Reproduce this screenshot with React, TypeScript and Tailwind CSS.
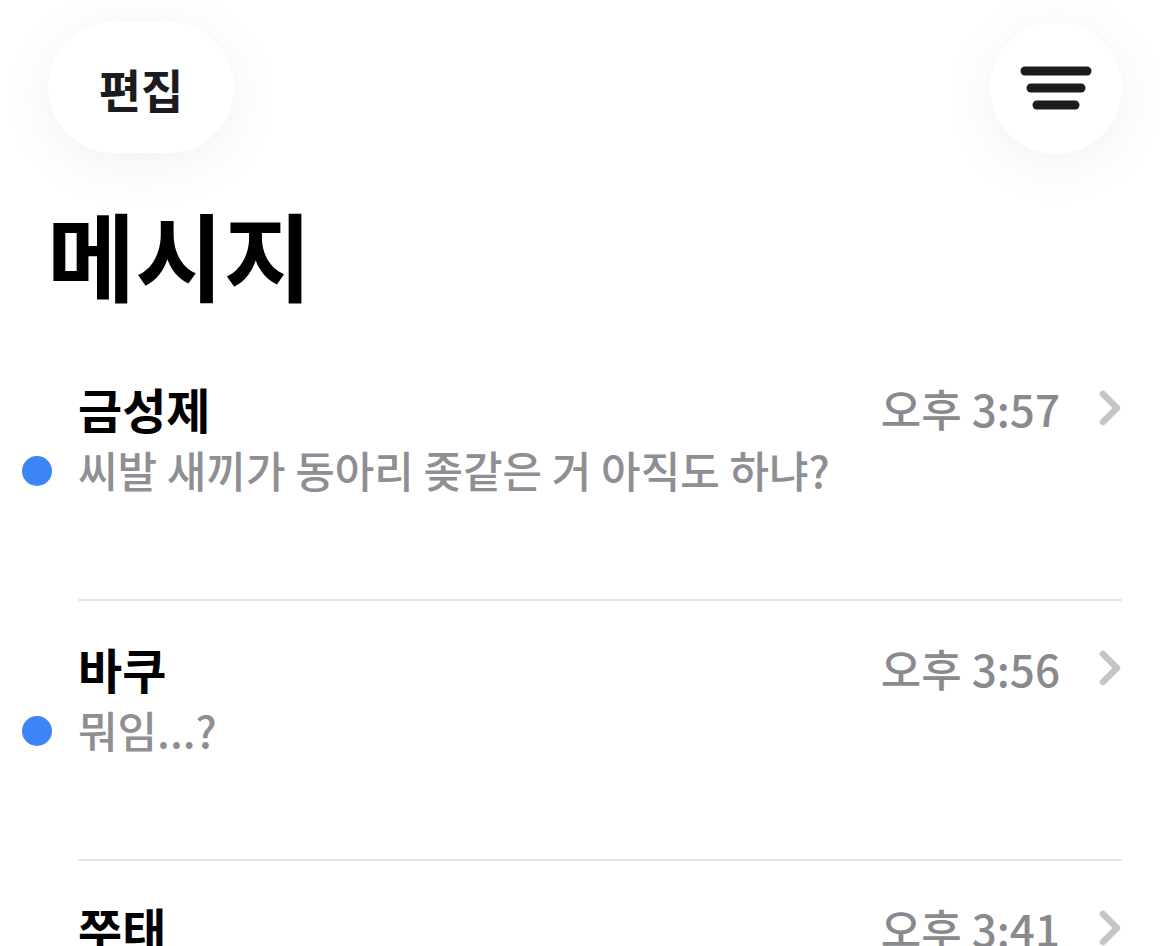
import React from "react";

type Thread = {
  name: string;
  time: string;
  preview?: string;
  unread?: boolean;
};

const threads: Thread[] = [
  { name: "금성제", time: "오후 3:57", preview: "씨발 새끼가 동아리 좆같은 거 아직도 하냐?", unread: true },
  { name: "바쿠", time: "오후 3:56", preview: "뭐임...?", unread: true },
  { name: "쭈태", time: "오후 3:41", preview: "", unread: false },
];

function Chevron() {
  return (
    <svg width="24" height="38" viewBox="0 0 24 38" fill="none">
      <path d="M5 5 L19 19 L5 33" stroke="#c5c5c8" strokeWidth="6.5" strokeLinecap="round" strokeLinejoin="round" />
    </svg>
  );
}

function FilterIcon() {
  return (
    <svg width="72" height="46" viewBox="0 0 72 46" fill="none">
      <line x1="5" y1="6" x2="67" y2="6" stroke="#1c1c1e" strokeWidth="9" strokeLinecap="round" />
      <line x1="11" y1="23" x2="61" y2="23" stroke="#1c1c1e" strokeWidth="9" strokeLinecap="round" />
      <line x1="17" y1="40" x2="55" y2="40" stroke="#1c1c1e" strokeWidth="9" strokeLinecap="round" />
    </svg>
  );
}

function Row({ t }: { t: Thread }) {
  return (
    <div className="flex h-[260px]">
      <div className="w-[78px] shrink-0 flex justify-center pt-[115px] pr-[4px]">
        {t.unread && <div className="w-[30px] h-[30px] rounded-full bg-[#3d84f5]" />}
      </div>
      <div className="flex-1 border-b-2 border-[#e6e6e8] pt-[37px]">
        <div className="flex items-center justify-between h-[60px]">
          <span className="text-[48px] font-bold leading-[60px] text-black">{t.name}</span>
          <div className="flex items-center gap-[38px]">
            <span className="text-[44px] leading-[60px] font-medium text-[#8a8a8e]">{t.time}</span>
            <Chevron />
          </div>
        </div>
        <div className="mt-[1px] h-[60px] text-[43px] leading-[60px] font-medium text-[#8e8e93]">{t.preview}</div>
      </div>
    </div>
  );
}

export default function App() {
  return (
    <div className="w-[1170px] h-[946px] bg-white overflow-hidden font-['Noto_Sans_CJK_KR','Noto_Sans',sans-serif]">
      <div className="flex justify-between items-start pl-[48px] pr-[48px] pt-[22px]">
        <div className="w-[186px] h-[131px] rounded-full bg-white shadow-[0_10px_60px_rgba(0,0,0,0.06)] flex items-center justify-center">
          <span className="text-[46px] font-bold text-[#1c1c1e] leading-none">편집</span>
        </div>
        <div className="w-[132px] h-[132px] rounded-full bg-white shadow-[0_10px_60px_rgba(0,0,0,0.06)] flex items-center justify-center">
          <FilterIcon />
        </div>
      </div>
      <h1 className="pl-[47px] mt-[44px] text-[96px] font-bold leading-[110px] text-black">메시지</h1>
      <div className="mt-[33px] pr-[48px]">
        {threads.map((t) => (
          <Row key={t.name} t={t} />
        ))}
      </div>
    </div>
  );
}
